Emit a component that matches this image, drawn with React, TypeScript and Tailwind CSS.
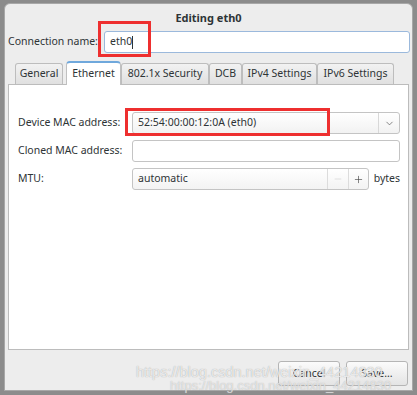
import { ChevronDown, Minus, Plus } from "lucide-react";

const tabs = [
  { label: "General", w: "w-[48px]" },
  { label: "Ethernet", w: "w-[55px]" },
  { label: "802.1x Security", w: "w-[88px]" },
  { label: "DCB", w: "w-[33px]" },
  { label: "IPv4 Settings", w: "w-[75px]" },
  { label: "IPv6 Settings", w: "w-[77px]" },
];

const Field = ({ label, children }: { label: string; children: React.ReactNode }) => (
  <div className="flex items-center h-[22px]">
    <span className="w-[114px] shrink-0 text-[#2e3436]">{label}</span>
    {children}
  </div>
);

const App = () => {
  return (
    <div
      className="relative w-[417px] h-[395px] overflow-hidden bg-[#8c8c8c] pl-[4px] pt-[3px] text-[10.5px] text-[#2e3436]"
      style={{ fontFamily: '"Noto Sans", "DejaVu Sans", sans-serif' }}
    >
      <div className="w-[409px] h-[388px] bg-[#ededed] rounded-t-[6px] border border-[#a8a8a8] flex flex-col">
        <div className="h-[26px] flex items-center justify-center font-bold text-[11px] pt-[3px]">Editing eth0</div>

        <div className="flex items-center h-[22px] mt-[1px] pl-[3px] pr-[2px]">
          <span className="w-[96px] shrink-0">Connection name:</span>
          <div className="relative flex-1 h-[22px] bg-white border border-[#9bb9dc] rounded-[3px] flex items-center pl-[5px]">
            eth0<span className="w-px h-[13px] bg-[#2e3436]"></span>
            <div className="absolute left-[-7px] top-[-11px] w-[53px] h-[36px] border-[3px] border-[#ee2f2f]"></div>
          </div>
        </div>

        <div className="flex items-end h-[31px] pl-[10px]">
          {tabs.map((t) =>
            t.label === "Ethernet" ? (
              <div
                key={t.label}
                className={`${t.w} shrink-0 whitespace-nowrap h-[24px] ml-[3px] bg-white border border-b-0 border-[#c0c0c0] border-t-[2px] border-t-[#6fa8dc] rounded-t-[4px] flex items-center justify-center relative top-[1px] z-10`}
              >
                {t.label}
              </div>
            ) : (
              <div
                key={t.label}
                className={`${t.w} shrink-0 whitespace-nowrap h-[21px] bg-gradient-to-b from-[#f2f2f2] to-[#e0e0e0] border border-b-0 border-[#bdbdbd] rounded-t-[3px] flex items-center justify-center`}
              >
                {t.label}
              </div>
            )
          )}
        </div>

        <div className="mx-[3px] h-[266px] bg-white border border-[#bcbcbc] flex flex-col gap-[6px] pt-[27px] pl-[9px] pr-[8px]">
          <Field label="Device MAC address:">
            <div className="flex-1 h-[22px] bg-gradient-to-b from-white to-[#f2f2f2] border border-[#c4c4c4] rounded-[3px] flex items-center relative">
              <span className="pl-[5px] flex-1">52:54:00:00:12:0A (eth0)</span>
              <div className="w-[21px] h-full border-l border-[#d8d8d8] flex items-center justify-center">
                <ChevronDown size={11} strokeWidth={1.5} className="text-[#555]" />
              </div>
              <div className="absolute left-[-8px] top-[-5px] w-[205px] h-[28px] border-[3px] border-[#ee2f2f]"></div>
            </div>
          </Field>
          <Field label="Cloned MAC address:">
            <div className="flex-1 h-[22px] bg-white border border-[#c4c4c4] rounded-[3px]"></div>
          </Field>
          <Field label="MTU:">
            <div className="w-[237px] h-[22px] bg-gradient-to-b from-white to-[#f3f3f3] border border-[#c4c4c4] rounded-[3px] flex items-center">
              <span className="pl-[5px] flex-1">automatic</span>
              <div className="w-[21px] h-full border-l border-[#dcdcdc] flex items-center justify-center">
                <Minus size={10} strokeWidth={1.2} className="text-[#c6c6c6]" />
              </div>
              <div className="w-[20px] h-full border-l border-[#dcdcdc] flex items-center justify-center">
                <Plus size={11} strokeWidth={1.4} className="text-[#444]" />
              </div>
            </div>
            <span className="ml-[5px]">bytes</span>
          </Field>
        </div>

        <div className="flex justify-end gap-[6px] pr-[4px] mt-[11px]">
          <button className="w-[62px] h-[25px] bg-gradient-to-b from-[#fbfbfb] to-[#e4e4e4] border border-[#b5b5b5] rounded-[3px]">Cancel</button>
          <button className="w-[62px] h-[25px] bg-gradient-to-b from-[#fbfbfb] to-[#e4e4e4] border border-[#b5b5b5] rounded-[3px]">Save...</button>
        </div>
      </div>

      <div
        className="absolute left-[136px] top-[362px] text-[14.5px] text-white/75 whitespace-nowrap"
        style={{ fontFamily: '"Liberation Sans", sans-serif', textShadow: "0 0 1px #999" }}
      >
        https://blog.csdn.net/weixin_44214830
      </div>
      <div
        className="absolute left-[170px] top-[376px] text-[13px] text-white/60 whitespace-nowrap"
        style={{ fontFamily: '"Liberation Sans", sans-serif', textShadow: "0 0 1px #aaa" }}
      >
        https://blog.csdn.net/weixin_44214830
      </div>
    </div>
  );
};

export default App;
